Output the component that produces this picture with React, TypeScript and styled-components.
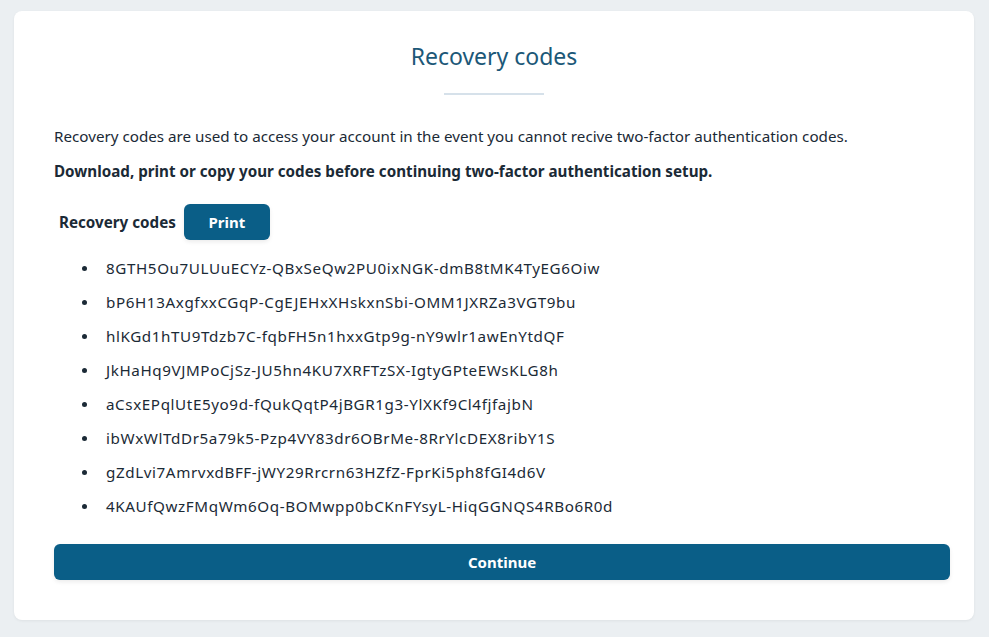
import React from "react";
import styled, { createGlobalStyle } from "styled-components";

const Global = createGlobalStyle`
  html, body { margin: 0; padding: 0; background: #ebeff2; }
  body { font-family: "Noto Sans", "Open Sans", sans-serif; color: #1b2a36; }
`;

const Page = styled.div`
  padding: 11px 15px 17px 14px;
`;

const Card = styled.div`
  background: #ffffff;
  border-radius: 8px;
  box-shadow: 0 1px 3px rgba(0, 0, 0, 0.06);
  padding: 29px 40px 40px 40px;
  display: flex;
  flex-direction: column;
`;

const Title = styled.h1`
  margin: 0;
  font-size: 23px;
  line-height: 32px;
  font-weight: 400;
  color: #1c5878;
  text-align: center;
`;

const Divider = styled.div`
  width: 100px;
  height: 2px;
  background: #d6e1ea;
  margin: 21px auto 0;
`;

const Text = styled.p<{ $bold?: boolean }>`
  margin: ${(p) => (p.$bold ? "13px" : "30px")} 0 0;
  font-size: 15.2px;
  line-height: 22px;
  font-weight: ${(p) => (p.$bold ? 700 : 400)};
  color: #1b2a36;
`;

const CodesHeader = styled.div`
  display: flex;
  align-items: center;
  gap: 8px;
  margin-top: 22px;
  padding-left: 5px;
`;

const Label = styled.span`
  font-size: 15.2px;
  font-weight: 700;
  color: #1b2a36;
`;

const Button = styled.button<{ $wide?: boolean }>`
  border: none;
  background: #0a5e87;
  color: #ffffff;
  font-family: inherit;
  font-size: 15px;
  font-weight: 700;
  height: 36px;
  border-radius: 6px;
  box-shadow: 0 2px 4px rgba(0, 0, 0, 0.08);
  width: ${(p) => (p.$wide ? "100%" : "86px")};
  cursor: pointer;
`;

const List = styled.ul`
  margin: 11px 0 0;
  padding-left: 28px;
  list-style: none;
`;

const Item = styled.li`
  display: flex;
  align-items: center;
  gap: 19px;
  height: 34px;
  font-size: 15.2px;
  letter-spacing: 0.6px;
  color: #1b2a36;
  &::before {
    content: "";
    flex: none;
    width: 5px;
    height: 5px;
    border-radius: 50%;
    background: #1b2a36;
  }
`;

const Footer = styled.div`
  margin: 21px -16px 0 0;
`;

const codes = [
  "8GTH5Ou7ULUuECYz-QBxSeQw2PU0ixNGK-dmB8tMK4TyEG6Oiw",
  "bP6H13AxgfxxCGqP-CgEJEHxXHskxnSbi-OMM1JXRZa3VGT9bu",
  "hlKGd1hTU9Tdzb7C-fqbFH5n1hxxGtp9g-nY9wlr1awEnYtdQF",
  "JkHaHq9VJMPoCjSz-JU5hn4KU7XRFTzSX-IgtyGPteEWsKLG8h",
  "aCsxEPqlUtE5yo9d-fQukQqtP4jBGR1g3-YlXKf9Cl4fjfajbN",
  "ibWxWlTdDr5a79k5-Pzp4VY83dr6OBrMe-8RrYlcDEX8ribY1S",
  "gZdLvi7AmrvxdBFF-jWY29Rrcrn63HZfZ-FprKi5ph8fGI4d6V",
  "4KAUfQwzFMqWm6Oq-BOMwpp0bCKnFYsyL-HiqGGNQS4RBo6R0d",
];

export default function App() {
  return (
    <Page>
      <Global />
      <Card>
        <Title>Recovery codes</Title>
        <Divider />
        <Text>
          Recovery codes are used to access your account in the event you cannot recive two-factor authentication codes.
        </Text>
        <Text $bold>Download, print or copy your codes before continuing two-factor authentication setup.</Text>
        <CodesHeader>
          <Label>Recovery codes</Label>
          <Button>Print</Button>
        </CodesHeader>
        <List>
          {codes.map((c) => (
            <Item key={c}>{c}</Item>
          ))}
        </List>
        <Footer>
          <Button $wide>Continue</Button>
        </Footer>
      </Card>
    </Page>
  );
}
